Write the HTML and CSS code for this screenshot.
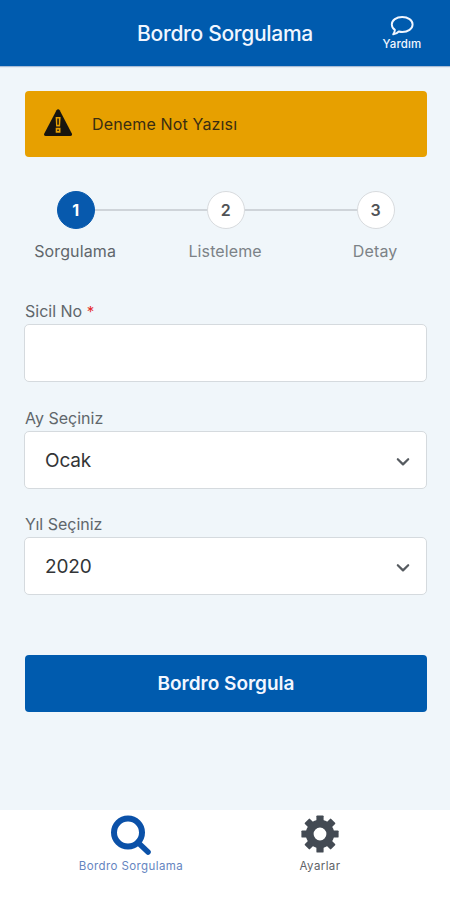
FILE: index.html
```html
<!DOCTYPE html>
<html lang="tr">
<head>
<meta charset="utf-8">
<title>Bordro Sorgulama</title>
<link rel="stylesheet" href="styles.css">
</head>
<body>
<header class="header">
  <h1 class="title">Bordro Sorgulama</h1>
  <a class="help">
    <svg width="24" height="20" viewBox="0 0 24 20" fill="none" stroke="currentColor" stroke-width="1.9" stroke-linejoin="round"><path d="M12.200 1C6.400 1 1.800 4.200 1.800 8.500c0 2.200 1.200 4.100 3.100 5.400-.2 1.700-.8 3.200-1.700 4.500 2.300-.3 4.200-1.400 5.600-2.900 1.100.3 2.200.5 3.400.5 5.800 0 10.400-3.200 10.400-7.500S18 1 12.200 1Z"/></svg>
    <span class="help-text">Yardım</span>
  </a>
</header>
<main class="main">
  <div class="alert">
    <svg width="30" height="28" viewBox="0 0 30 28"><path d="M13.500 1.300c.8-1.300 2.400-1.300 3.200 0l12.100 23.200c.7 1.400 0 2.500-1.500 2.500H2.700C1.200 27 .6 25.900 1.300 24.500Z" fill="#17150f"/><path d="M12.600 8h5l-.5 9.500h-4ZM12.700 18.800h4.800v5h-4.800Z" fill="#e7a000"/><path d="M14.300 9.500h1.500v6.200h-1.500ZM14.300 20.400h1.500v1.700h-1.500Z" fill="#17150f"/></svg>
    <span class="alert-text">Deneme Not Yazısı</span>
  </div>
  <ol class="steps">
    <li class="step active"><span class="dot">1</span><span class="step-name">Sorgulama</span></li>
    <li class="step"><span class="dot">2</span><span class="step-name">Listeleme</span></li>
    <li class="step"><span class="dot">3</span><span class="step-name">Detay</span></li>
  </ol>
  <form class="form">
    <div class="field"><div class="label">Sicil No <span class="req">*</span></div><div class="control"></div></div>
    <div class="field"><div class="label">Ay Seçiniz</div><div class="control"><span class="val month">Ocak</span><svg class="chev" width="16" height="12" viewBox="0 0 16 12"><path d="M2.800 3.200l5.200 5.200 5.200-5.200"/></svg></div></div>
    <div class="field"><div class="label">Yıl Seçiniz</div><div class="control"><span class="val">2020</span><svg class="chev" width="16" height="12" viewBox="0 0 16 12"><path d="M2.800 3.200l5.200 5.200 5.200-5.200"/></svg></div></div>
    <div class="submit"><span>Bordro Sorgula</span></div>
  </form>
</main>
<nav class="tabs">
  <a class="tab current">
    <svg width="42" height="42" viewBox="0 0 42 42" fill="none" stroke="currentColor"><circle cx="18" cy="19.500" r="14" stroke-width="6"/><path d="M28.500 30l9.500 9" stroke-width="5.500" stroke-linecap="round"/></svg>
    <span class="tab-text">Bordro Sorgulama</span>
  </a>
  <a class="tab">
    <svg width="42" height="42" viewBox="-21 -21 42 42" fill="currentColor"><g id="teeth"><path id="tooth" d="M-3.600-12v-5.700q0-.9.900-.9h5.400q.9 0 .9.900v5.700Z"/><use href="#tooth" transform="rotate(90)"/><use href="#tooth" transform="rotate(180)"/><use href="#tooth" transform="rotate(270)"/></g><use href="#teeth" transform="rotate(45)"/><circle r="10.300" fill="none" stroke="currentColor" stroke-width="7.800"/></svg>
    <span class="tab-text">Ayarlar</span>
  </a>
</nav>
</body>
</html>
```
FILE: styles.css
```css
* { box-sizing: border-box; }
body {
  margin: 0;
  width: 450px;
  height: 900px;
  display: flex;
  flex-direction: column;
  overflow: hidden;
  background: #f0f6fa;
  font-family: Inter, sans-serif;
  color: #60666b;
}
svg { display: block; flex: none; }
.header {
  height: 66px;
  display: grid;
  grid-template-columns: 96px 1fr 96px;
  align-items: center;
  background: #005bae;
  color: #f1f6ff;
  box-shadow: 0 1px 1px #a9bdd6;
}
.title {
  grid-column: 2;
  margin: 0;
  text-align: center;
  font-size: 21px;
  font-weight: 500;
  letter-spacing: -.3px;
  white-space: nowrap;
}
.help {
  display: flex;
  flex-direction: column;
  align-items: center;
}
.help-text { font-size: 11.5px; line-height: 14px; margin-top: 1px; font-weight: 500; letter-spacing: .15px; }
.main { flex: 1; padding: 25px 23px 0 25px; }
.alert {
  height: 66px;
  border-radius: 4px;
  background: #e7a000;
  display: flex;
  align-items: center;
  padding: 0 18px;
  gap: 19px;
  color: #392d12;
}
.alert svg { margin-bottom: 2px; }
.alert-text { font-size: 16px; letter-spacing: .15px; }
.steps {
  list-style: none;
  margin: 34px -24px 0 -24.4px;
  padding: 0;
  display: grid;
  grid-template-columns: repeat(3, 150px);
  height: 110px;
}
.step {
  display: grid;
  grid-template-columns: 1fr 38px 1fr;
  grid-template-rows: 38px 44px;
  align-content: start;
  align-items: center;
}
.step::before, .step::after { content: ""; height: 2px; background: #cfd4d9; grid-row: 1; }
.step::before { grid-column: 1; }
.step::after { grid-column: 3; }
.step:first-child::before, .step:last-child::after { visibility: hidden; }
.dot {
  grid-column: 2;
  grid-row: 1;
  height: 38px;
  border: 1px solid #d8dbde;
  border-radius: 50%;
  background: #fff;
  display: flex;
  align-items: center;
  justify-content: center;
  font-size: 16px;
  font-weight: 600;
  color: #505356;
}
.active .dot { background: #0759ad; border-color: #0759ad; color: #fff; font-weight: 700; }
.step-name { grid-column: 1 / -1; grid-row: 2; text-align: center; font-size: 16px; letter-spacing: .12px; color: #7c8287; padding-right: 1px; }
.active .step-name { color: #60666b; }
.field { height: 106.5px; }
.label { height: 23px; line-height: 21px; font-size: 16px; }
.req { color: #e52c2c; font-size: 15px; }
.control {
  height: 58px;
  margin: 0 0 0 -1px;
  border: 1px solid #d5dade;
  border-radius: 5px;
  background: #fff;
  display: flex;
  align-items: center;
  justify-content: space-between;
  padding: 0 15px 0 20px;
}
.val { font-size: 19px; color: #333537; letter-spacing: -.15px; }
.month { margin-top: 2px; }
.chev { fill: none; stroke: #565b60; stroke-width: 2.2; stroke-linecap: round; stroke-linejoin: round; margin-top: 4px; }
.submit {
  height: 57px;
  margin-top: 34px;
  border-radius: 4px;
  background: #005bae;
  color: #f3f7ff;
  display: flex;
  align-items: center;
  justify-content: center;
  font-size: 19px;
  font-weight: 600;
}
.tabs {
  height: 90px;
  background: #fff;
  display: grid;
  grid-template-columns: 190px 188px;
  justify-content: center;
}
.tab {
  display: flex;
  flex-direction: column;
  align-items: center;
  padding-top: 3px;
  color: #434a53;
}
.current { color: #0b51a8; }
.tab-text { font-size: 11.5px; line-height: 16px; margin-top: 3px; color: #606266; letter-spacing: .4px; }
.current .tab-text { color: #6585bf; }
```
